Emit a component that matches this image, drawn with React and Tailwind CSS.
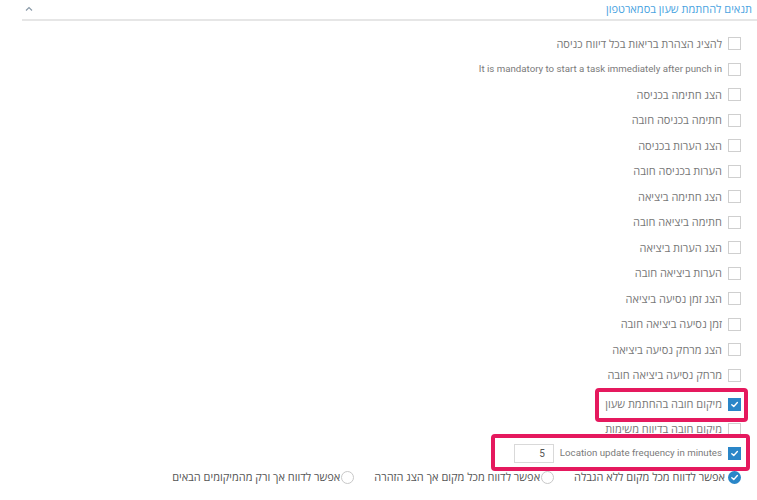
import React from 'react';

const rows = [
  { he: true, t: 'להציג הצהרת בריאות בכל דיווח כניסה' },
  { he: false, t: 'It is mandatory to start a task immediately after punch in' },
  { he: true, t: 'הצג חתימה בכניסה' },
  { he: true, t: 'חתימה בכניסה חובה' },
  { he: true, t: 'הצג הערות בכניסה' },
  { he: true, t: 'הערות בכניסה חובה' },
  { he: true, t: 'הצג חתימה ביציאה' },
  { he: true, t: 'חתימה ביציאה חובה' },
  { he: true, t: 'הצג הערות ביציאה' },
  { he: true, t: 'הערות ביציאה חובה' },
  { he: true, t: 'הצג זמן נסיעה ביציאה' },
  { he: true, t: 'זמן נסיעה ביציאה חובה' },
  { he: true, t: 'הצג מרחק נסיעה ביציאה' },
  { he: true, t: 'מרחק נסיעה ביציאה חובה' },
];

const Check = ({ checked }) => (
  <span
    className={`flex h-[13px] w-[13px] shrink-0 items-center justify-center border ${
      checked ? 'border-[#2a86c8] bg-[#2a86c8]' : 'border-[#cfcfcf] bg-white'
    }`}
  >
    {checked && (
      <svg width="9" height="9" viewBox="0 0 10 10" fill="none">
        <path d="M2 5.2 L4.2 7.3 L8.2 2.8" stroke="white" strokeWidth="1.5" strokeLinecap="round" strokeLinejoin="round" />
      </svg>
    )}
  </span>
);

const Radio = ({ checked }) =>
  checked ? (
    <span className="flex h-[13px] w-[13px] shrink-0 items-center justify-center rounded-full bg-[#2a86c8]">
      <svg width="9" height="9" viewBox="0 0 10 10" fill="none">
        <path d="M2 5.2 L4.2 7.3 L8.2 2.8" stroke="white" strokeWidth="1.5" strokeLinecap="round" strokeLinejoin="round" />
      </svg>
    </span>
  ) : (
    <span className="h-[13px] w-[13px] shrink-0 rounded-full border border-[#c8c8c8] bg-white" />
  );

// hebrew labels in Open Sans 11px, latin ones in Roboto ~10px (narrower, like the original UI font)
const Label = ({ he, children }) => (
  <span
    className={
      he
        ? "font-['Open_Sans',sans-serif] text-[11px] text-[#777]"
        : "font-['Roboto',sans-serif] text-[9.7px] text-[#7a7a7a]"
    }
  >
    {children}
  </span>
);

export default function App() {
  return (
    <div className="h-[500px] w-[757px] overflow-hidden bg-white font-['Open_Sans','Liberation_Sans',sans-serif]">
      <div className="ml-[22px] flex h-[21px] items-center justify-between border-b-2 border-[#e6e6e6] pr-[5px]">
        <svg width="10" height="8" viewBox="0 0 10 8" className="ml-[2px] mb-[2px]">
          <path d="M2 5.5 L5 2.5 L8 5.5" stroke="#8a9aa8" strokeWidth="1.2" fill="none" />
        </svg>
        <span dir="rtl" className="text-[11px] text-[#4aa3df]">תנאים להחתמת שעון בסמארטפון</span>
      </div>

      <div dir="rtl" className="pr-[16px] pt-[10px]">
        {rows.map((r) => (
          <div key={r.t} className="flex h-[25.5px] items-center gap-[6px]">
            <Check />
            <Label he={r.he}>{r.t}</Label>
          </div>
        ))}

        <div className="flex h-[29px] items-center pt-[4px]">
          <div className="relative flex items-center gap-[6px]">
            <Check checked />
            <Label he>מיקום חובה בהחתמת שעון</Label>
            <span className="pointer-events-none absolute -bottom-[9px] -left-[10px] -right-[7px] -top-[8px] rounded-[4px] border-4 border-[#e5195e]" />
          </div>
        </div>

        <div className="flex h-[24px] items-center gap-[6px]">
          <Check />
          <Label he>מיקום חובה בדיווח משימות</Label>
        </div>

        <div className="flex h-[25px] items-center">
          <div className="relative flex items-center gap-[6px]">
            <Check checked />
            <Label>Location update frequency in minutes</Label>
            <input
              readOnly
              value="5"
              className="h-[19px] w-[40px] border border-[#d9d9d9] px-[8px] text-right font-['Roboto',sans-serif] text-[10px] text-[#555] outline-none"
              dir="ltr"
            />
            <span className="pointer-events-none absolute -bottom-[8px] -left-[23px] -right-[9px] -top-[10px] rounded-[4px] border-4 border-[#e5195e]" />
          </div>
        </div>

        <div className="flex h-[23px] items-center gap-[20px] text-[11px] text-[#555]">
          <div className="flex items-center gap-[3px]">
            <Radio checked />
            <span>אפשר לדווח מכל מקום ללא הגבלה</span>
          </div>
          <div className="flex items-center gap-[1px]">
            <Radio />
            <span>אפשר לדווח מכל מקום אך הצג הזהרה</span>
          </div>
          <div className="flex items-center gap-[1px]">
            <Radio />
            <span>אפשר לדווח אך ורק מהמיקומים הבאים</span>
          </div>
        </div>
      </div>
    </div>
  );
}
